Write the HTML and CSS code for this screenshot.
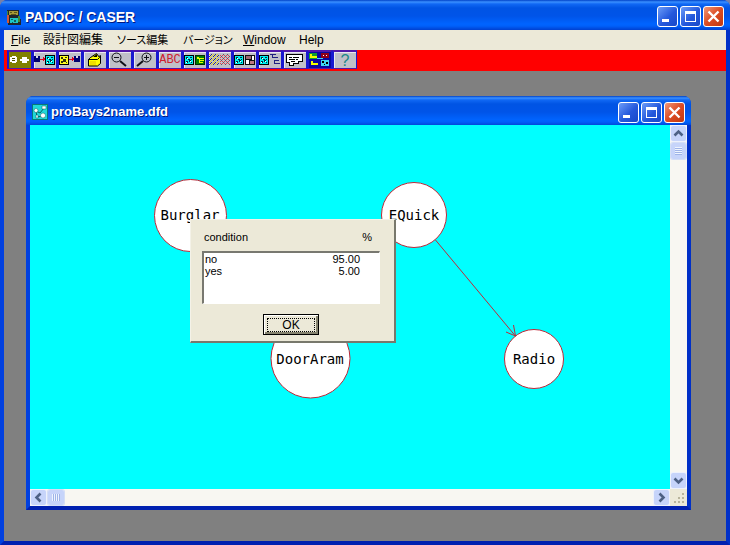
FILE: index.html
```html
<!DOCTYPE html>
<html lang="ja">
<head>
<meta charset="utf-8">
<title>PADOC / CASER</title>
<link rel="stylesheet" href="styles.css">
</head>
<body>
<svg class="defs" aria-hidden="true">
  <pattern id="weave" width="4" height="4" patternUnits="userSpaceOnUse"><path fill="#303080" d="M0 0h1v1H0zM2 2h1v1H2zM3 1h1v1H3z"/><path fill="#e0d020" d="M1 1h1v1H1zM3 3h1v1H3zM2 0h1v1H2zM0 2h1v1H0z"/></pattern>
  <pattern id="weave-red" width="4" height="4" patternUnits="userSpaceOnUse"><path fill="#605060" d="M0 0h1v1H0zM2 2h1v1H2z"/><path fill="#e04050" d="M1 1h1v1H1zM3 3h1v1H3zM3 1h1v1H3zM1 3h1v1H1z"/></pattern>
  <symbol id="diagram" viewBox="0 0 10 10">
    <path fill="#000" d="M0 0h10v10H0z"/><path fill="#00f0f0" d="M1 1h8v8H1z"/>
    <path fill="#003040" d="M2 2h2v2H2zM6 2h2v1H6zM4 4h2v1H4zM5 5h2v2H5zM2 6h2v2H2zM7 7h1v1H7zM7 4h1v1H7z"/>
    <path fill="#fff" d="M3 3h1v1H3zM6 6h1v1H6zM2 7h1v1H2z"/>
  </symbol>
  <symbol id="floppy" viewBox="0 0 6 6"><path fill="#000070" d="M0 0h6v6H0z"/><path fill="#d8d8e8" d="M2 0h2v2H2z"/></symbol>
  <symbol id="min" viewBox="0 0 21 21"><path fill="#fff" d="M5 13h7v3H5z"/></symbol>
  <symbol id="max" viewBox="0 0 21 21"><path fill="#fff" fill-rule="evenodd" d="M5 5h11v11H5zM6 8h9v7H6z"/></symbol>
  <symbol id="close" viewBox="0 0 21 21"><path stroke="#fff" stroke-width="2.4" d="M5.5 5.5l10 10M15.500 5.500l-10 10"/></symbol>
  <symbol id="chevron" viewBox="0 0 15 15"><path fill="none" stroke="#4d6185" stroke-width="2.6" d="M3.500 9.500l4-4 4 4"/></symbol>
</svg>
<div class="window app">
  <header class="titlebar">
    <svg class="app-icon" viewBox="0 0 16 16" shape-rendering="crispEdges"><path fill="#20242c" d="M1 1h12v9h2v6H2v-6H1z"/><path fill="#a89a38" d="M3 2h9v4H3z"/><path fill="#5a541c" d="M4 3h2v1H4zM8 3h3v1H8zM5 5h5v1H5z"/><path fill="#1cc6c6" d="M4 9h8v5H4z"/><path fill="#106060" d="M5 10h2v1H5zM8 11h2v2H8zM6 13h1v1H6z"/><path fill="#d05838" d="M1 6h2v8H1z"/><path fill="#408838" d="M1 2h1v4H1zM12 7h2v6h-2z"/></svg>
    <h1 class="title">PADOC / CASER</h1>
    <button class="wbtn" aria-label="Minimize"><svg><use href="#min"/></svg></button>
    <button class="wbtn" aria-label="Maximize"><svg><use href="#max"/></svg></button>
    <button class="wbtn close" aria-label="Close"><svg><use href="#close"/></svg></button>
  </header>
  <nav class="menu">
    <button><u>F</u>ile</button><button>設計図編集</button><button class="kana">ソース編集</button><button class="kana">バージョン</button><button><u>W</u>indow</button><button>Help</button>
  </nav>
  <div class="toolbar" role="toolbar">
    <button class="olive" aria-label="Connect"><svg viewBox="0 0 25 19"><path fill="#fff" d="M5 6h4v1h1v5H9v1H5v-1H3V7h2zM13 9h2V7h5v2h2v2h-2v2h-5v-2h-2z"/><path fill="#505000" d="M5 8h3v1H5zM5 10h3v1H5z"/></svg></button>
    <button aria-label="Load"><svg viewBox="0 0 25 19"><use href="#floppy" x="2" y="6" width="6" height="6"/><path fill="#e00020" d="M8 9h3V7l2 2-2 3v-2H8z"/><use href="#diagram" x="13" y="5" width="10" height="10"/></svg></button>
    <button aria-label="Save"><svg viewBox="0 0 25 19"><path fill="#000" d="M2 5h10v10H2z"/><path fill="#ffff20" d="M3 6h8v8H3z"/><path fill="#303010" d="M4 7h2v2H4zM8 7h2v1H8zM6 9h3v3H6zM4 11h2v2H4zM9 12h1v1H9z"/><path fill="#e00020" d="M12 9h3V7l2 2-2 3v-2h-3z"/><use href="#floppy" x="17" y="6" width="6" height="6"/></svg></button>
    <button aria-label="Box"><svg viewBox="0 0 25 19" class="smooth"><path d="M6.500 9.500l2-2h7l3-2v8l-3 2.500h-9z" fill="#ffff00" stroke="#000"/><path d="M8.500 7.500l6-4 3 4-2 2h-9z" fill="#ffff00" stroke="#000"/><path d="M8 11h6v4H8z" fill="#f0e000"/><path d="M11 7l4-3v3z" fill="#000"/></svg></button>
    <button aria-label="Zoom out"><svg viewBox="0 0 25 19" class="smooth"><circle cx="9.500" cy="7.500" r="4.500" fill="none" stroke="#101018"/><path stroke="#101018" d="M7 7.500h5"/><path stroke="#101018" stroke-width="2" d="M13 11l6 5"/></svg></button>
    <button aria-label="Zoom in"><svg viewBox="0 0 25 19" class="smooth"><circle cx="14.500" cy="7.500" r="4.500" fill="none" stroke="#101018"/><path stroke="#101018" d="M12 7.500h5M14.500 5v5"/><path stroke="#101018" stroke-width="2" d="M11 11l-6 5"/></svg></button>
    <button class="abc">ABC</button>
    <button aria-label="Generate"><svg viewBox="0 0 25 19"><use href="#diagram" x="2" y="5" width="10" height="10"/><path fill="#003000" d="M13 5h10v10H13z"/><path fill="#008000" d="M14 6h8v8h-8z"/><path fill="#e8ff00" d="M15 7h2v1h5v1h-4v1h4v1h-4v1h3v1h-4V9h-2z"/></svg></button>
    <button aria-label="Convert"><svg viewBox="0 0 25 19"><path fill="url(#weave)" d="M2 4h10v11H2z"/><path fill="url(#weave-red)" d="M13 4h10v11H13z"/></svg></button>
    <button aria-label="Layout"><svg viewBox="0 0 25 19"><use href="#diagram" x="2" y="5" width="10" height="10"/><path fill="#101010" d="M13 5h10v10H13z"/><path fill="#a06870" d="M14 6h5v3h-5z"/><path fill="#fff" d="M20 6h2v4h-2zM14 10h3v4h-3z"/><path fill="#c07880" d="M18 11h4v3h-4z"/></svg></button>
    <button aria-label="Tree"><svg viewBox="0 0 25 19"><use href="#diagram" x="2" y="5" width="10" height="10"/><path fill="#202080" d="M13 4h6v1h-3v2h5v1h-4v2h5v1h-4v2h5v1h-6V8h-2V5h-2z"/></svg></button>
    <button aria-label="Comment"><svg viewBox="0 0 25 19"><path fill="#000" d="M4 4h17v8h-4v2h-5v2H7v-3H4z"/><path fill="#fff" d="M5 5h15v6h-4v2h-5v2H8v-3H5z"/><path fill="#000" d="M7 7h3v1H7zM11 7h6v1h-6zM7 9h6v1H7zM14 9h2v1h-2zM9 11h4v1H9z"/></svg></button>
    <button class="navy" aria-label="Structure"><svg viewBox="0 0 25 19"><path fill="#10a030" d="M2 3h8v6H2z"/><path fill="#f0ff00" d="M3 4h2v2h5v2H3zM4 11h2v2h5v2H4z"/><path fill="#900018" d="M14 3h8v5h-8z"/><path fill="#fff" d="M16 5h1v1h-1zM19 5h1v1h-1z"/><path fill="#40d8f0" d="M10 8h6v1h-6zM14 10h8v6h-8z"/><path fill="#000" d="M15 11h2v2h-2zM19 12h2v2h-2zM17 14h1v1h-1z"/></svg></button>
    <button class="help">?</button>
  </div>
  <main class="workspace">
    <section class="window child">
      <header class="titlebar">
        <svg class="app-icon" viewBox="0 0 16 16"><path fill="#087878" d="M0 0h16v16H0z"/><path fill="#20d8d8" d="M1 1h14v14H1z"/><path d="M4 7l4 2 4-5M4 7l1 6 6-1" fill="none" stroke="#086060"/><g fill="#fff" stroke="#086060" stroke-width=".5"><circle cx="4" cy="6.500" r="2"/><circle cx="11" cy="11.500" r="2.500"/><path d="M10 2h4v3h-4zM4 11h2v3H4z"/></g></svg>
        <h2 class="title">proBays2name.dfd</h2>
        <button class="wbtn" aria-label="Minimize"><svg><use href="#min"/></svg></button>
        <button class="wbtn" aria-label="Maximize"><svg><use href="#max"/></svg></button>
        <button class="wbtn close" aria-label="Close"><svg><use href="#close"/></svg></button>
      </header>
      <div class="view">
        <div class="canvas">
          <svg class="graph" width="640" height="364">
            <g class="nodes">
              <circle cx="160.500" cy="90.500" r="36"/><circle cx="384" cy="90" r="32.500"/><circle cx="280.500" cy="233.500" r="39.500"/><circle cx="504" cy="234" r="29.500"/>
              <path d="M405.500 115L485 210.500M476 207l9.500 4-2-11"/>
            </g>
            <g class="labels"><text x="160" y="95">Burglar</text><text x="384" y="95">EQuick</text><text x="280" y="239">DoorAram</text><text x="504" y="239">Radio</text></g>
          </svg>
          <div class="dialog" role="dialog" aria-label="condition">
            <div class="heads"><span>condition</span><span>%</span></div>
            <div class="listbox"><table><tbody><tr><td>no</td><td>95.00</td></tr><tr><td>yes</td><td>5.00</td></tr></tbody></table></div>
            <button class="ok"><span>OK</span></button>
          </div>
        </div>
        <div class="vscroll">
          <button aria-label="Scroll up"><svg><use href="#chevron"/></svg></button><div class="thumb"></div><button class="last down" aria-label="Scroll down"><svg><use href="#chevron"/></svg></button>
        </div>
        <div class="hscroll">
          <button class="left" aria-label="Scroll left"><svg><use href="#chevron"/></svg></button><div class="thumb"></div><button class="last right" aria-label="Scroll right"><svg><use href="#chevron"/></svg></button>
        </div>
        <svg class="grip" viewBox="0 0 17 17"><path fill="#b8b49c" d="M12 4h2v2h-2zM8 8h2v2H8zM12 8h2v2h-2zM4 12h2v2H4zM8 12h2v2H8zM12 12h2v2h-2z"/></svg>
      </div>
    </section>
  </main>
</div>
</body>
</html>
```
FILE: styles.css
```css
* { box-sizing: border-box; }
body { margin: 0; background: #7880a8; font-family: "Liberation Sans", "Noto Sans CJK JP", sans-serif; font-size: 12px; color: #000; }
button { margin: 0; padding: 0; border: 0; font: inherit; color: inherit; }
svg { display: block; }
.defs { position: absolute; width: 0; height: 0; }

.window { display: flex; flex-direction: column; border: solid #0048e0; border-width: 0 4px 4px; border-color: #0048e0 #0030c8 #0020b0 #0040e0; border-radius: 8px 8px 0 0; background: #0050e8; }
.app { height: 100vh; }
.titlebar { display: flex; flex: none; align-items: center; gap: 2px; height: 30px; margin: 0 -4px; padding: 3px 6px 0 6px; border-radius: 7px 7px 0 0; background: linear-gradient(#0042c8 0, #3a90ff 2px, #1068f4 4px, #0054e4 8px, #0054e8 16px, #0064ff 24px, #0060fa 26px, #0040d0 30px); }
.app-icon { width: 16px; height: 16px; flex: none; }
.title { flex: 1; margin: 0 0 0 1px; font: bold 14px/20px "Liberation Sans", sans-serif; color: #fff; text-shadow: 1px 1px #001880; }
.wbtn { width: 21px; height: 21px; border: 1px solid #fff; border-radius: 3px; background: linear-gradient(135deg, #6c9cf8, #2458dc 55%, #1848c8); }
.wbtn svg { width: 21px; height: 21px; margin: -1px; }
.wbtn.close { background: linear-gradient(135deg, #f09878, #dc4c24 50%, #c03810); }

.menu { display: grid; flex: none; grid-template-columns: 32px 74px 66px 60px 56px auto; justify-content: start; height: 20px; padding: 0 7px; background: #ece9d8; }
.menu button { background: none; line-height: 18px; text-align: left; white-space: nowrap; font-feature-settings: "palt"; }
.menu .kana { font-size: 11px; }

.toolbar { display: flex; flex: none; height: 21px; padding: 0 3px; background: #f00; }
.toolbar button { width: 25px; height: 19px; background: #c0c0c8; border: 2px solid #3010b8; border-width: 2px 1px 1px 2px; border-color: #5018a8 #1818d0 #5018a8 #1818d0; box-shadow: inset 1px 1px #e8e8f0; }
.toolbar svg { width: 25px; height: 19px; margin: -2px 0 0 -2px; shape-rendering: crispEdges; }
.toolbar .smooth { shape-rendering: auto; }
.toolbar .olive { background: #808000; box-shadow: none; }
.toolbar .navy { background: #0808a0; box-shadow: none; }
.toolbar .abc { font: 12px/15px "Liberation Mono", monospace; color: #d02030; }
.toolbar .help { font: 16px/15px "Liberation Sans", sans-serif; color: #208888; }

.workspace { display: flex; flex: 1; padding: 25px 35px 31px 22px; background: #808080; }
.child { flex: 1; }
.child .titlebar { height: 29px; }
.child .title { font-size: 13px; }
.view { display: grid; flex: 1; grid-template: 1fr 17px / 1fr 17px; background: #ece9d8; }
.canvas { position: relative; overflow: hidden; background: #0ff; }
.nodes { fill: #fff; stroke: #c02838; }
.nodes path { fill: none; }
.labels { font: 14px "DejaVu Sans Mono", monospace; text-anchor: middle; }

.vscroll, .hscroll { display: flex; gap: 2px; padding: 1px; background: #f8f7f2; }
.vscroll { flex-direction: column; }
.vscroll button, .hscroll button { width: 15px; height: 15px; border-radius: 2px; background: #c6d4fa; box-shadow: 0 0 0 1px #eef2fc; }
.vscroll svg, .hscroll svg { width: 15px; height: 15px; }
.down svg { transform: rotate(180deg); }
.left svg { transform: rotate(-90deg); }
.right svg { transform: rotate(90deg); }
.vscroll .last { margin-top: auto; }
.hscroll .last { margin-left: auto; }
.thumb { width: 15px; height: 16px; border: 4px solid #c6d4fa; border-radius: 2px; background: repeating-linear-gradient(#eef4fe 0 1px, #9fb4e8 1px 2px); box-shadow: 0 0 0 1px #d4def6; }
.hscroll .thumb { width: 16px; height: 15px; background: repeating-linear-gradient(90deg, #eef4fe 0 1px, #9fb4e8 1px 2px); }
.grip { width: 17px; height: 17px; }

.dialog { position: absolute; left: 160px; top: 94px; width: 206px; padding: 9px 14px 6px 11px; border: solid; border-width: 1px 2px 2px 1px; border-color: #f4f2e8 #78786c #78786c #f4f2e8; background: #ece9d8; }
.heads { display: flex; justify-content: space-between; padding: 0 8px 0 2px; font-size: 11px; line-height: 16px; }
.listbox { height: 53px; margin-top: 6px; padding: 0 19px 0 1px; border: solid; border-width: 2px 1px 1px 2px; border-color: #787870 #fff #fff #787870; background: #fff; }
.listbox table { width: 100%; border-collapse: collapse; font-size: 11px; line-height: 12px; }
.listbox td { padding: 0; }
.listbox td + td { text-align: right; }
.ok { display: block; width: 56px; height: 21px; margin: 10px auto 0; padding: 2px; border: 1px solid #000; background: #ece9d8; box-shadow: inset 1px 1px #fff, inset -2px -2px #85836f; }
.ok span { display: block; height: 14px; margin: 0 1px; border: 1px dotted #000; line-height: 12px; }
```
